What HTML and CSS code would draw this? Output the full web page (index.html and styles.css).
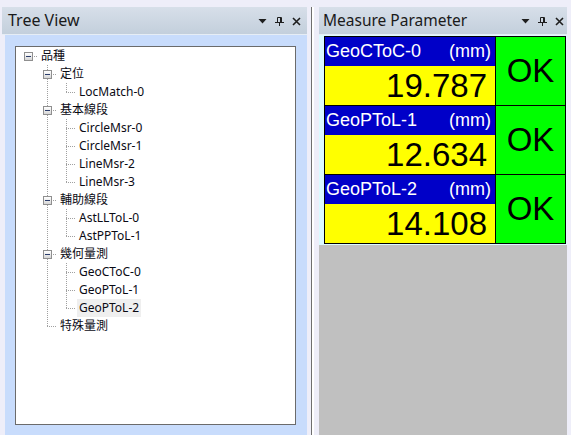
FILE: index.html
```html
<!DOCTYPE html>
<html lang="zh-Hant">
<head>
    <meta charset="UTF-8">
    <title>Tree View / Measure Parameter</title>
    <link rel="stylesheet" href="styles.css">
</head>
<body>
    <div class="dock">
        <!-- Left dock panel: tree of measure items -->
        <section class="panel tree-panel">
            <header class="caption">
                <span class="caption-text">Tree View</span>
                <span class="caption-tools">
                    <svg viewBox="0 0 9 9" width="9" height="9"><polygon points="0.5,2 8.5,2 4.5,6.5" fill="#1e1e1e"/></svg>
                    <svg viewBox="0 0 9 9" width="9" height="9"><path d="M2.5 0.5h4v5h-4z M5.5 0.5v5 M0 5.5h9 M4.5 6v3" stroke="#1e1e1e" fill="none"/></svg>
                    <svg viewBox="0 0 9 9" width="9" height="9"><path d="M1 1L8 8 M8 1L1 8" stroke="#1e1e1e" stroke-width="1.6"/></svg>
                </span>
            </header>
            <div class="tree-body">
                <div class="tree">
                    <div class="node"><span class="cell exp root"><i class="box"></i></span><span class="label">品種</span></div>
                    <div class="node"><span class="cell"></span><span class="cell exp"><i class="box"></i></span><span class="label">定位</span></div>
                    <div class="node"><span class="cell"></span><span class="cell pipe"></span><span class="cell elbow"></span><span class="label">LocMatch-0</span></div>
                    <div class="node"><span class="cell"></span><span class="cell exp"><i class="box"></i></span><span class="label">基本線段</span></div>
                    <div class="node"><span class="cell"></span><span class="cell pipe"></span><span class="cell tee"></span><span class="label">CircleMsr-0</span></div>
                    <div class="node"><span class="cell"></span><span class="cell pipe"></span><span class="cell tee"></span><span class="label">CircleMsr-1</span></div>
                    <div class="node"><span class="cell"></span><span class="cell pipe"></span><span class="cell tee"></span><span class="label">LineMsr-2</span></div>
                    <div class="node"><span class="cell"></span><span class="cell pipe"></span><span class="cell elbow"></span><span class="label">LineMsr-3</span></div>
                    <div class="node"><span class="cell"></span><span class="cell exp"><i class="box"></i></span><span class="label">輔助線段</span></div>
                    <div class="node"><span class="cell"></span><span class="cell pipe"></span><span class="cell tee"></span><span class="label">AstLLToL-0</span></div>
                    <div class="node"><span class="cell"></span><span class="cell pipe"></span><span class="cell elbow"></span><span class="label">AstPPToL-1</span></div>
                    <div class="node"><span class="cell"></span><span class="cell exp"><i class="box"></i></span><span class="label">幾何量測</span></div>
                    <div class="node"><span class="cell"></span><span class="cell pipe"></span><span class="cell tee"></span><span class="label">GeoCToC-0</span></div>
                    <div class="node"><span class="cell"></span><span class="cell pipe"></span><span class="cell tee"></span><span class="label">GeoPToL-1</span></div>
                    <div class="node"><span class="cell"></span><span class="cell pipe"></span><span class="cell elbow"></span><span class="label selected">GeoPToL-2</span></div>
                    <div class="node"><span class="cell"></span><span class="cell elbow"></span><span class="label">特殊量測</span></div>
                </div>
            </div>
        </section>

        <div class="splitter"></div>

        <!-- Right dock panel: measured values -->
        <section class="panel measure-panel">
            <header class="caption">
                <span class="caption-text small">Measure Parameter</span>
                <span class="caption-tools">
                    <svg viewBox="0 0 9 9" width="9" height="9"><polygon points="0.5,2 8.5,2 4.5,6.5" fill="#1e1e1e"/></svg>
                    <svg viewBox="0 0 9 9" width="9" height="9"><path d="M2.5 0.5h4v5h-4z M5.5 0.5v5 M0 5.5h9 M4.5 6v3" stroke="#1e1e1e" fill="none"/></svg>
                    <svg viewBox="0 0 9 9" width="9" height="9"><path d="M1 1L8 8 M8 1L1 8" stroke="#1e1e1e" stroke-width="1.6"/></svg>
                </span>
            </header>
            <div class="measure-body">
                <div class="meas-wrap">
                    <div class="meas">
                        <div class="mrow">
                            <div class="mleft">
                                <div class="mhead"><span>GeoCToC-0</span><span>(mm)</span></div>
                                <div class="mval">19.787</div>
                            </div>
                            <div class="mok">OK</div>
                        </div>
                        <div class="mrow">
                            <div class="mleft">
                                <div class="mhead"><span>GeoPToL-1</span><span>(mm)</span></div>
                                <div class="mval">12.634</div>
                            </div>
                            <div class="mok">OK</div>
                        </div>
                        <div class="mrow">
                            <div class="mleft">
                                <div class="mhead"><span>GeoPToL-2</span><span>(mm)</span></div>
                                <div class="mval">14.108</div>
                            </div>
                            <div class="mok">OK</div>
                        </div>
                    </div>
                </div>
            </div>
        </section>
    </div>
</body>
</html>
```

FILE: styles.css
```css
* {
    margin: 0;
    padding: 0;
    box-sizing: border-box;
}

body {
    background: #eeeef9;
    overflow: hidden;
    height: 435px;
    font-family: 'Noto Sans', 'Noto Sans CJK TC', sans-serif;
    color: #000;
}

.dock {
    display: flex;
    height: 435px;
    padding-top: 7px;
    padding-left: 2px;
}

.panel {
    display: flex;
    flex-direction: column;
}

.tree-panel {
    width: 305px;
}

.measure-panel {
    width: 248px;
}

/* Caption bar shared by both dock panels */
.caption {
    display: flex;
    align-items: center;
    justify-content: space-between;
    height: 28px;
    flex: none;
    padding-left: 6px;
    padding-right: 6px;
    background: linear-gradient(180deg, #d7dfe9 0%, #c3cfdc 100%);
    border-bottom: 1px solid #e6edf5;
}

.measure-panel .caption {
    padding-left: 4px;
    padding-right: 3px;
}

.caption-text {
    font-size: 16px;
    color: #1a1a1a;
    margin-bottom: 2px;
    white-space: nowrap;
}

.caption-text.small {
    font-size: 15.5px;
}

.caption-tools {
    display: flex;
    gap: 8px;
    margin-top: 2px;
}

.caption-tools svg {
    display: block;
}

.splitter {
    width: 12px;
    flex: none;
    background: linear-gradient(90deg, transparent 4px, #6f6f6f 4px 5px, #ffffff 5px 7px, transparent 7px);
}

/* Tree view */
.tree-body {
    flex: 1;
    display: flex;
    background: #c8dcfc;
    border-left: 3px solid #eeeef9;
    padding: 11px 11px 10px 10px;
}

.tree {
    flex: 1;
    background: #fff;
    border: 1px solid #6b6b6b;
    padding-left: 3px;
    --dv: repeating-linear-gradient(180deg, #a0a0a0 0 1px, transparent 1px 2px);
    --dh: repeating-linear-gradient(90deg, #a0a0a0 0 1px, transparent 1px 2px);
}

.node {
    display: flex;
    height: 18px;
}

.cell {
    width: 19px;
    height: 18px;
    flex: none;
    display: flex;
    justify-content: center;
    align-items: flex-start;
    background-repeat: no-repeat;
}

.pipe {
    background-image: var(--dv);
    background-position: 9px 0;
    background-size: 1px 100%;
}

.tee,
.exp {
    background-image: var(--dv), var(--dh);
    background-position: 9px 0, 9px 9px;
    background-size: 1px 100%, 10px 1px;
}

.elbow {
    background-image: var(--dv), var(--dh);
    background-position: 9px 0, 9px 9px;
    background-size: 1px 10px, 10px 1px;
}

.exp.root {
    background-image: var(--dh);
    background-position: 9px 9px;
    background-size: 10px 1px;
}

.box {
    display: block;
    width: 9px;
    height: 9px;
    margin-top: 5px;
    border: 1px solid #8f8f8f;
    background:
        linear-gradient(#2b3d6b, #2b3d6b) center / 5px 1px no-repeat,
        linear-gradient(180deg, #ffffff, #d6d6d6);
}

.label {
    margin-left: 1px;
    padding: 0 2px;
    font-size: 12px;
    line-height: 18px;
    white-space: nowrap;
    color: #0a0a14;
}

.label.selected {
    background: #efefef;
}

/* Measure parameter grid */
.measure-body {
    flex: 1;
    background: #c0c0c0;
}

.meas-wrap {
    background: #dcfaff;
    padding: 1px 0 1px 5px;
}

.meas {
    width: 242px;
    display: flex;
    flex-direction: column;
    gap: 1px;
    background: #000;
    border: 1px solid #000;
    font-family: 'Liberation Sans', Arial, sans-serif;
}

.mrow {
    display: grid;
    grid-template-columns: 170px 69px;
    column-gap: 1px;
}

.mleft {
    display: flex;
    flex-direction: column;
}

.mhead {
    height: 29px;
    display: flex;
    align-items: center;
    justify-content: space-between;
    padding: 0 4px 0 1px;
    background: #0000c8;
    color: #fff;
    font-size: 18px;
}

.mval {
    height: 39px;
    background: #ffff00;
    text-align: right;
    padding-right: 8px;
    font-size: 33px;
    line-height: 39px;
}

.mok {
    display: flex;
    align-items: center;
    justify-content: center;
    background: #00ff00;
    font-size: 33px;
}
```
